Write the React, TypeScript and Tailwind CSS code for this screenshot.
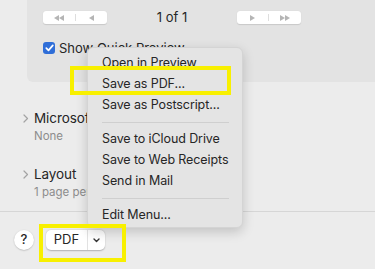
import { ReactNode } from "react";

const Chevron = () => (
  <svg width="6" height="9" viewBox="0 0 6 9" className="shrink-0">
    <path d="M1 1l3.5 3.5L1 8" fill="none" stroke="#a3a3a3" strokeWidth="1.2" strokeLinecap="round" strokeLinejoin="round" />
  </svg>
);

const Tri = ({ dir }: { dir: "l" | "r" }) => (
  <svg width="5" height="6" viewBox="0 0 5 6">
    <path d={dir === "l" ? "M5 0v6L0 3z" : "M0 0v6l5-3z"} fill="#b5b5b5" />
  </svg>
);

const NavButton = ({ children }: { children: ReactNode }) => (
  <div className="w-[64px] h-[13px] bg-white rounded-[3px] shadow-[0_0.5px_1px_rgba(0,0,0,0.12)] flex items-center">
    {children}
  </div>
);

const MenuItem = ({ label }: { label: string }) => (
  <div className="h-[21px] flex items-center pl-[14px] text-[12.5px] tracking-[-0.1px] text-[#262626] whitespace-nowrap">{label}</div>
);

const MenuSep = () => (
  <div className="h-[13px] flex items-center pl-[14px] pr-[13px]">
    <div className="h-px w-full bg-[#cfcfcf]" />
  </div>
);

const Section = ({ title, sub }: { title: string; sub: string }) => (
  <div className="flex gap-[5px] pl-[23px]">
    <div className="pt-[5px]">
      <Chevron />
    </div>
    <div className="flex flex-col">
      <span className="text-[13.5px] leading-[18px] tracking-[-0.1px] text-[#262626]">{title}</span>
      <span className="text-[11.5px] leading-[14px] mt-[2px] text-[#8c8c8c]">{sub}</span>
    </div>
  </div>
);

export default function App() {
  return (
    <div className="relative w-[375px] h-[269px] overflow-hidden bg-[#ececec] font-['Inter','Liberation_Sans',sans-serif] antialiased">
      {/* preview panel */}
      <div className="ml-[27px] h-[82px] bg-[#e3e3e3] rounded-bl-[6px] pl-[16px] pt-[11px]">
        <div className="flex items-center">
          <NavButton>
            <div className="flex w-[32px] justify-center items-center">
              <Tri dir="l" />
              <Tri dir="l" />
            </div>
            <div className="w-px h-[7px] bg-[#dedede]" />
            <div className="flex flex-1 justify-center">
              <Tri dir="l" />
            </div>
          </NavButton>
          <div className="w-[130px] text-center text-[13px] leading-[13px] text-[#262626]">1 of 1</div>
          <NavButton>
            <div className="flex flex-1 justify-center">
              <Tri dir="r" />
            </div>
            <div className="w-px h-[7px] bg-[#dedede]" />
            <div className="flex w-[32px] justify-center items-center">
              <Tri dir="r" />
              <Tri dir="r" />
            </div>
          </NavButton>
        </div>
        <div className="flex items-center gap-[4px] mt-[17px]">
          <div className="w-[12px] h-[12px] rounded-[3px] bg-[#2f6ed8] flex items-center justify-center">
            <svg width="9" height="8" viewBox="0 0 9 8">
              <path d="M1.3 4.2l2.2 2.2L7.8 1.4" fill="none" stroke="white" strokeWidth="1.7" strokeLinecap="round" strokeLinejoin="round" />
            </svg>
          </div>
          <span className="text-[13px] leading-[14px] text-[#262626]">Show Quick Preview</span>
        </div>
      </div>

      {/* option sections */}
      <div className="h-[129px] flex flex-col gap-[22px] pt-[27px]">
        <Section title="Microsoft Word" sub="None" />
        <Section title="Layout" sub="1 page per sheet" />
      </div>

      {/* footer */}
      <div className="border-t border-[#d6d6d6] h-[58px] flex items-center gap-[12px] pl-[14px] pb-[1px]">
        <div className="w-[20px] h-[20px] rounded-full bg-white shadow-[0_0.5px_1.5px_rgba(0,0,0,0.25)] flex items-center justify-center text-[13px] font-medium text-[#262626]">
          ?
        </div>
        <div className="w-[59px] h-[20px] rounded-[5px] bg-white shadow-[0_0.5px_1.5px_rgba(0,0,0,0.25)] flex items-center">
          <div className="w-[41px] text-center text-[13px] text-[#262626]">PDF</div>
          <div className="w-px h-full bg-[#e2e2e2]" />
          <div className="flex-1 flex justify-center">
            <svg width="7" height="5" viewBox="0 0 7 5">
              <path d="M1 1l2.5 2.5L6 1" fill="none" stroke="#333" strokeWidth="1.4" strokeLinecap="round" strokeLinejoin="round" />
            </svg>
          </div>
        </div>
      </div>

      {/* PDF menu */}
      <div className="absolute left-[87px] top-[47px] w-[156px] h-[181px] rounded-[6px] bg-[#e4e4e4] border border-[#d4d4d4] shadow-[0_4px_12px_rgba(0,0,0,0.18)] pt-[5px]">
        <MenuItem label="Open in Preview" />
        <MenuItem label="Save as PDF..." />
        <MenuItem label="Save as Postscript..." />
        <MenuSep />
        <MenuItem label="Save to iCloud Drive" />
        <MenuItem label="Save to Web Receipts" />
        <MenuItem label="Send in Mail" />
        <MenuSep />
        <MenuItem label="Edit Menu..." />
      </div>

      {/* highlight boxes */}
      <div className="absolute left-[70px] top-[66px] w-[161px] h-[29px] border-4 border-[#f8f000]" />
      <div className="absolute left-[39px] top-[224px] w-[87px] h-[38px] border-4 border-[#f8f000]" />
    </div>
  );
}
